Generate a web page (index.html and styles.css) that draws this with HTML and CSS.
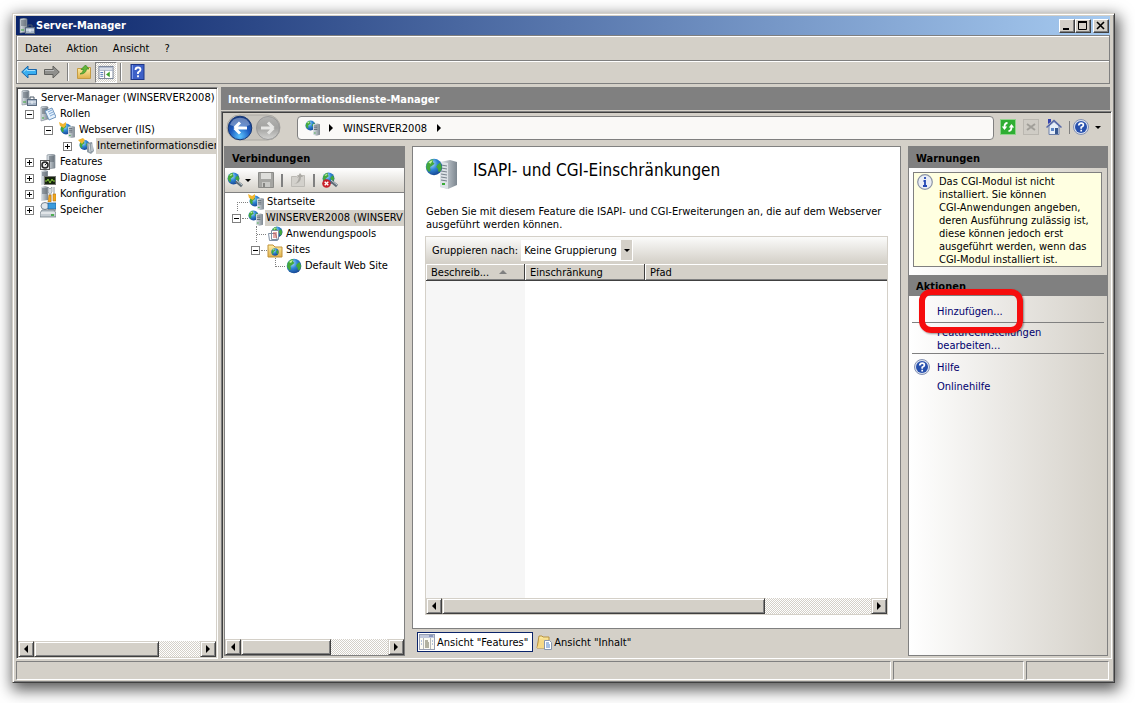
FILE: index.html
```html
<!DOCTYPE html>
<html lang="de">
<head>
<meta charset="utf-8">
<title>Server-Manager</title>
<link rel="stylesheet" href="styles.css">
</head>
<body>
<svg class="defs" aria-hidden="true">
  <defs>
    <radialGradient id="g-globe" cx=".35" cy=".3" r=".8"><stop offset="0" stop-color="#b8e4ff"/><stop offset=".45" stop-color="#2f86d6"/><stop offset="1" stop-color="#123a86"/></radialGradient>
    <radialGradient id="g-blue" cx=".5" cy=".85" r=".85"><stop offset="0" stop-color="#5cc4ff"/><stop offset=".5" stop-color="#1c5cc0"/><stop offset="1" stop-color="#163880"/></radialGradient>
    <linearGradient id="g-grey" x2="0" y2="1"><stop offset="0" stop-color="#b4b4b2"/><stop offset=".5" stop-color="#a2a2a0"/><stop offset="1" stop-color="#d4d4d2"/></linearGradient>
    <linearGradient id="g-tower"><stop offset="0" stop-color="#dfe5ea"/><stop offset="1" stop-color="#7d8790"/></linearGradient>
    <linearGradient id="g-folder" x2="0" y2="1"><stop offset="0" stop-color="#fff0a8"/><stop offset="1" stop-color="#dfb04c"/></linearGradient>
  </defs>
  <symbol id="globe" viewBox="0 0 16 16"><circle cx="8" cy="8" r="7.300" fill="url(#g-globe)"/><path d="M1.500 5Q4 1 7.500 1L7 3.500 8.500 5 6 7 4.500 8 5 11 3.500 12.500 1 9ZM11 6l2.500-2 1.500 4-1 3.500-2 1-.5-3L10 8Z" fill="#43a83c"/><path d="M3 4q2-2 4-2l-2 3Z" fill="#c9f2a0"/></symbol>
  <symbol id="tower" viewBox="0 0 8 14"><path d="M0 1 5 0 8 1V13L4 14 0 13Z" fill="url(#g-tower)"/><path d="M1 3h4M1 5h4M1 7h4" stroke="#5b6670"/><path d="M1 11h2" stroke="#3aa83a"/></symbol>
  <symbol id="server" viewBox="0 0 16 16"><path d="M1 1 5 0 8 1V14L1 15Z" fill="url(#g-tower)" stroke="#7b858e" stroke-width=".6"/><path d="M2 3h5M2 5h5M2 7h5" stroke="#56606a"/><path d="M2 12h3" stroke="#3aa83a"/><path d="M9 9V7h4v2" fill="none" stroke="#4b5866"/><rect x="6.500" y="9.500" width="9" height="6" fill="#a7b6c8" stroke="#5b6b7f"/><path d="M7 12h8M11 11v3" stroke="#eef3f8"/></symbol>
  <symbol id="roles" viewBox="0 0 16 16"><path d="M1 1 5 0 8 1V13L1 15Z" fill="url(#g-tower)" stroke="#7b858e" stroke-width=".6"/><path d="M2 3h5M2 5h5M2 7h5" stroke="#56606a"/><path d="M5 5 12 2 16 11 9 14Z" fill="#e6f1fc" stroke="#6d94bd"/><path d="M8 6l4-2M9 8l4-2M10 10l4-2" stroke="#7ba6d4"/><path d="M2 12h2" stroke="#3aa83a"/></symbol>
  <symbol id="web" viewBox="0 0 16 16"><use href="#globe" x="0" y="0" width="11" height="11"/><use href="#tower" x="8" y="3" width="7" height="13"/></symbol>
  <symbol id="webstar" viewBox="0 0 16 16"><use href="#globe" x="1" y="1" width="12" height="12"/><path d="M0 0 4 2 7 0 7 3 5 6 1 4Z" fill="#f1b530"/><use href="#tower" x="9" y="4" width="7" height="12"/></symbol>
  <symbol id="iis" viewBox="0 0 16 16"><use href="#globe" x="1" y="1" width="11" height="12"/><path d="M0 2 5 0 7 2 4 6Z" fill="#f1b530"/><path d="M9 5l5-1 2 9-3 3-4-2Z" fill="#8f9ba5"/><path d="M11 6l1 8M14 6v7" stroke="#dce3e8"/></symbol>
  <symbol id="features" viewBox="0 0 16 16"><path d="M7 1 11 0 15 1V14L7 15Z" fill="url(#g-tower)" stroke="#7b858e" stroke-width=".6"/><path d="M9 3h5M9 5h5M9 7h5" stroke="#56606a"/><rect x=".5" y="6.500" width="9" height="9" fill="#e8e8e8" stroke="#555"/><circle cx="5" cy="11" r="3" fill="none" stroke="#222" stroke-width="1.500"/><path d="M5 11l2-2" stroke="#222"/></symbol>
  <symbol id="diag" viewBox="0 0 16 16"><path d="M1 1 5 0 8 1V14L1 15Z" fill="url(#g-tower)"/><path d="M2 3h5M2 5h5" stroke="#56606a"/><rect x="4.500" y="6.500" width="11" height="8" fill="#16240e" stroke="#777"/><path d="M5 11h2l1-2 2 4 2-4 1 2h2" fill="none" stroke="#86cc3c"/></symbol>
  <symbol id="config" viewBox="0 0 16 16"><path d="M1 1 5 0 8 1V14L1 15Z" fill="url(#g-tower)"/><path d="M2 3h5M2 5h5M2 7h5" stroke="#56606a"/><path d="M8 1l2 2 2-2v5l-1 1v8H9V7L8 6Z" fill="#d8dde2" stroke="#7d8790" stroke-width=".6"/><path d="M14 1v7" stroke="#8c969e"/><path d="M9 9h2v7H8ZM13 8h3v7h-3Z" fill="#efa81f" stroke="#b87410" stroke-width=".6"/></symbol>
  <symbol id="storage" viewBox="0 0 16 16"><ellipse cx="5" cy="4" rx="4" ry="3.500" fill="#dfe6ec" stroke="#7a8792"/><rect x="8" y="1" width="8" height="6" fill="#3c9bdc" stroke="#1b5c96" stroke-width=".7"/><path d="M8 8h8" stroke="#777"/><path d="M2 8h12l2 3v4H0v-4Z" fill="#c3cbd1" stroke="#66727c" stroke-width=".7"/><path d="M1 11h14" stroke="#fff"/><path d="M11 13h3" stroke="#28a428" stroke-width="1.500"/></symbol>
  <symbol id="pools" viewBox="0 0 16 16"><use href="#globe" x="4" y="0" width="12" height="12"/><path d="M1.500 7.500h7l2 7h-8ZM4.500 4.500h7v9h-7Z" fill="#fff" stroke="#7f8fa3"/><path d="M6 7h4M6 9h4M6 11h4" stroke="#d2504a"/></symbol>
  <symbol id="sites" viewBox="0 0 16 16"><path d="M1 3h5l2 2h7v10H1Z" fill="url(#g-folder)" stroke="#c19137"/><use href="#globe" x="4" y="6" width="8" height="8"/></symbol>
  <symbol id="help" viewBox="0 0 16 16"><circle cx="8" cy="8" r="7.500" fill="#dbe2ef" stroke="#8592b4"/><circle cx="8" cy="8" r="6" fill="#2750ad"/><path d="M5.700 6.500Q6 4.200 8.200 4.200T10.400 6.200Q10.400 7.300 8.200 8.300V9.700M8.200 10.800v1.700" fill="none" stroke="#fff" stroke-width="1.700"/></symbol>
  <symbol id="connect" viewBox="0 0 16 16"><use href="#globe" x="0" y="0" width="13" height="13"/><path d="M9 9l6 5" stroke="#5f6c75" stroke-width="3"/><path d="M9 8l6 5" stroke="#c5d2da"/></symbol>
</svg>

<main class="window">
  <header class="titlebar">
    <svg class="i16"><use href="#server"/></svg>
    <h1>Server-Manager</h1>
    <button class="cap" aria-label="Minimieren"><svg viewBox="0 0 12 10"><path d="M2 8h6" stroke="#000" stroke-width="2"/></svg></button>
    <button class="cap" aria-label="Maximieren"><svg viewBox="0 0 12 10"><path d="M1.500 1v7.500h8V1M1 1h9" fill="none" stroke="#000"/><path d="M1 1h9" stroke="#000" stroke-width="2"/></svg></button>
    <button class="cap close" aria-label="Schließen"><svg viewBox="0 0 12 10"><path d="M2 1l7 7M9 1 2 8" stroke="#000" stroke-width="1.600"/></svg></button>
  </header>

  <nav class="menubar">
    <button>Datei</button><button>Aktion</button><button>Ansicht</button><button>?</button>
  </nav>

  <div class="toolbar">
    <button aria-label="Zurück"><svg class="i16" viewBox="0 0 16 16"><path d="M.7 8 7 2v3.500h8.500v5H7V14Z" fill="#39aef0" stroke="#1b66a8"/><path d="M3 7.500 6 5v1.500h8" fill="none" stroke="#a5defa"/></svg></button>
    <button aria-label="Vorwärts"><svg class="i16" viewBox="0 0 16 16"><path d="M15.300 8 9 2v3.500H.5v5H9V14Z" fill="#8f8f8c" stroke="#62625f"/><path d="M1 6.500h9" stroke="#bbb"/></svg></button>
    <i class="sep"></i>
    <button aria-label="Nach oben"><svg class="i16" viewBox="0 0 16 16"><path d="M1.500 4.500h5l1-1h7v11h-13Z" fill="url(#g-folder)" stroke="#c49b43"/><path d="M4 10Q7 9 7.500 5.500H5L9.500 1 13 5h-2.500Q10 10 4 10Z" fill="#62b53a" stroke="#34851e" stroke-width=".7"/></svg></button>
    <button class="pressed" aria-label="Konsolenstruktur"><svg class="i16" viewBox="0 0 16 16"><rect x=".5" y="1.500" width="15" height="13" fill="#fff" stroke="#707c92"/><path d="M1 3h14M1 5.500h14" stroke="#8798b5"/><path d="M6.500 6v8" stroke="#777"/><path d="M2 8h3M2 10h3M2 12h3" stroke="#4d75b4"/><path d="M12 7v6L8 10Z" fill="#3ba32b"/></svg></button>
    <i class="sep"></i>
    <button aria-label="Hilfe"><svg class="i16" viewBox="0 0 16 16"><rect x="2" y=".5" width="13" height="15" fill="#3d60c8" stroke="#1f3688"/><path d="M3.500 1v14" stroke="#7d9bec"/><path d="M6.500 6Q6.500 3.500 9 3.500T11.500 5.800Q11.500 7 9 8.500V10M9 11.300v2" fill="none" stroke="#fff" stroke-width="1.800"/></svg></button>
  </div>

  <div class="panes">
    <aside class="console">
      <ul class="tree">
        <li class="row l0"><svg class="i16"><use href="#server"/></svg><span>Server-Manager (WINSERVER2008)</span></li>
        <li class="row l1"><button class="ex" aria-label="Reduzieren"></button><svg class="i16"><use href="#roles"/></svg><span>Rollen</span></li>
        <li class="row l2"><button class="ex" aria-label="Reduzieren"></button><svg class="i16"><use href="#webstar"/></svg><span>Webserver (IIS)</span></li>
        <li class="row l3"><button class="ex plus" aria-label="Erweitern"></button><svg class="i16"><use href="#iis"/></svg><span class="sel">Internetinformationsdien</span></li>
        <li class="row l1"><button class="ex plus" aria-label="Erweitern"></button><svg class="i16"><use href="#features"/></svg><span>Features</span></li>
        <li class="row l1"><button class="ex plus" aria-label="Erweitern"></button><svg class="i16"><use href="#diag"/></svg><span>Diagnose</span></li>
        <li class="row l1"><button class="ex plus" aria-label="Erweitern"></button><svg class="i16"><use href="#config"/></svg><span>Konfiguration</span></li>
        <li class="row l1"><button class="ex plus" aria-label="Erweitern"></button><svg class="i16"><use href="#storage"/></svg><span>Speicher</span></li>
      </ul>
      <div class="scroll"><button class="sb" aria-label="Links"><i class="tri left"></i></button><i class="thumb t-console"></i><i class="track"></i><button class="sb" aria-label="Rechts"><i class="tri"></i></button></div>
    </aside>

    <section class="snapin">
      <h2 class="snaptitle">Internetinformationsdienste-Manager</h2>
      <div class="iisbody">
        <div class="address">
          <svg class="backfwd" viewBox="0 0 56 28"><rect x="1" y="1" width="53" height="25" rx="12.500" fill="#c8c5be" stroke="#aaa8a2"/><circle cx="14" cy="14" r="11.800" fill="url(#g-blue)" stroke="#173773"/><path d="M4 11a10.500 10.500 0 0 1 20 0Q14 15 4 11Z" fill="#fff" opacity=".35"/><path d="M8.500 14 14 8.500M8.500 14l5.500 5.500M8.500 14H21" fill="none" stroke="#fff" stroke-width="3"/><circle cx="42" cy="14" r="11.500" fill="url(#g-grey)" stroke="#999"/><path d="M47.500 14 42 8.500M47.500 14 42 19.500M47.500 14H35" fill="none" stroke="#e6e6e4" stroke-width="3"/></svg>
          <div class="crumbs"><svg class="i16"><use href="#web"/></svg><i class="tri"></i><button>WINSERVER2008</button><i class="tri"></i></div>
          <div class="addrtools">
            <button aria-label="Aktualisieren"><svg class="i16" viewBox="0 0 16 16"><rect x=".5" y=".5" width="15" height="15" fill="#2fae33" stroke="#8ed48a"/><path d="M7.500 4Q4.500 4 4.500 8M8.500 12Q11.500 12 11.500 8" fill="none" stroke="#fff" stroke-width="1.800"/><path d="M1.800 7.500h5.400L4.500 11ZM8.800 8.500h5.400L11.500 5Z" fill="#fff"/></svg></button>
            <button aria-label="Stopp" disabled><svg class="i16" viewBox="0 0 16 16"><rect x=".5" y=".5" width="15" height="15" fill="#cfccc5" stroke="#bab7b0"/><path d="M4 5l8 6M12 5l-8 6" stroke="#a19f99" stroke-width="2"/></svg></button>
            <button aria-label="Startseite"><svg class="i16" viewBox="0 0 16 16"><path d="M3 7v8.500h10V7L8 2.500Z" fill="#e7eef8" stroke="#6c7fa8"/><path d="M.5 8.500 8 1.500l7.500 7" fill="none" stroke="#5668a8" stroke-width="1.500"/><path d="M2 0h3v3l-3 2Z" fill="#3441b0"/><rect x="5" y="9" width="3" height="3" fill="#5e86c5"/><rect x="9" y="9" width="3" height="6" fill="#38588f"/></svg></button>
            <i class="bar"></i>
            <button class="drop" aria-label="Hilfe"><svg class="i16"><use href="#help"/></svg><i class="tri down"></i></button>
          </div>
        </div>

        <div class="columns">
          <aside class="connections">
            <h3>Verbindungen</h3>
            <div class="conntools">
              <button class="drop" aria-label="Verbinden"><svg class="i16"><use href="#connect"/></svg><i class="tri down"></i></button>
              <button aria-label="Speichern" disabled><svg class="i16" viewBox="0 0 16 16"><path d="M.5.5h15v15H.5Z" fill="#a5a5a2" stroke="#8b8b88"/><path d="M3 1h10v6H3Z" fill="#dededb"/><path d="M4 10h8v5H4Z" fill="#c8c8c5"/><path d="M5 11h2v4H5Z" fill="#858582"/></svg></button>
              <i class="bar"></i>
              <button aria-label="Nach oben" disabled><svg class="i16" viewBox="0 0 16 16"><path d="M1.500 4.500h5l1-1h7v11h-13Z" fill="#d3d1cc" stroke="#bcbab5"/><path d="M4 12q4-1 5-7l-2 1 3-5 3 4H11q0 6-7 7Z" fill="#acaaa5"/></svg></button>
              <i class="bar"></i>
              <button aria-label="Trennen"><svg class="i16" viewBox="0 0 16 16"><use href="#connect"/><circle cx="4.500" cy="11.500" r="4.300" fill="#c8202a"/><path d="M2.700 9.700l3.600 3.600M6.300 9.700l-3.600 3.600" stroke="#fff" stroke-width="1.400"/></svg></button>
            </div>
            <ul class="tree conn">
              <li class="row c0"><i class="dots"></i><svg class="i16"><use href="#webstar"/></svg><span>Startseite</span></li>
              <li class="row c1"><button class="ex" aria-label="Reduzieren"></button><i class="dots short"></i><svg class="i16"><use href="#web"/></svg><span class="sel">WINSERVER2008 (WINSERV</span></li>
              <li class="row c2"><i class="dots vert"></i><svg class="i16"><use href="#pools"/></svg><span>Anwendungspools</span></li>
              <li class="row c3"><button class="ex" aria-label="Reduzieren"></button><i class="dots short"></i><svg class="i16"><use href="#sites"/></svg><span>Sites</span></li>
              <li class="row c4"><i class="dots vert"></i><svg class="i16"><use href="#globe"/></svg><span>Default Web Site</span></li>
            </ul>
            <div class="scroll"><button class="sb" aria-label="Links"><i class="tri left"></i></button><i class="thumb t-conn"></i><i class="track"></i><button class="sb" aria-label="Rechts"><i class="tri"></i></button></div>
          </aside>

          <div class="center">
            <article class="card">
              <div class="heading">
                <svg class="i32" viewBox="0 0 32 32"><path d="M15 4 25 2 32 4V27L23 31 15 29Z" fill="url(#g-tower)"/><path d="M15 4 23 5V31L15 29Z" fill="#dce2e7"/><path d="M16 7l6 1M16 10l6 1M16 13l6 1M16 16l6 1M16 19l6 1M16 22l6 1" stroke="#76828c"/><path d="M17 26h3" stroke="#38ac38" stroke-width="2"/><use href="#globe" x="0" y="0" width="18" height="18"/></svg>
                <h2>ISAPI- und CGI-Einschränkungen</h2>
              </div>
              <p>Geben Sie mit diesem Feature die ISAPI- und CGI-Erweiterungen an, die auf dem Webserver ausgeführt werden können.</p>
              <div class="group">
                <label for="grouping">Gruppieren nach:</label>
                <span class="selwrap"><select id="grouping"><option>Keine Gruppierung</option></select><i class="tri down"></i></span>
              </div>
              <div class="grid">
                <table>
                  <thead><tr><th class="w1">Beschreib...<i class="sort"></i></th><th class="w2">Einschränkung</th><th>Pfad</th></tr></thead>
                  <tbody><tr><td class="sorted"></td><td></td><td></td></tr></tbody>
                </table>
                <div class="scroll"><button class="sb" aria-label="Links"><i class="tri left"></i></button><i class="thumb t-grid"></i><i class="track"></i><button class="sb" aria-label="Rechts"><i class="tri"></i></button></div>
              </div>
            </article>
            <div class="tabs">
              <button class="tab on"><svg class="i16" viewBox="0 0 16 16"><rect x=".5" y=".5" width="15" height="15" fill="#fbfbf4" stroke="#98a0b2"/><path d="M1 2.500h14" stroke="#c2c9dc" stroke-width="3"/><path d="M10 2h4" stroke="#5366a0"/><path d="M4.500 4v11M11.500 4v11" stroke="#b5b8b8"/><path d="M6 7h3M6 9h4M6 11h4M6 13h4" stroke="#68684e"/><path d="M2 7h1M2 10h1M13 7h1M13 10h1" stroke="#6d8ac2"/></svg>Ansicht "Features"</button>
              <button class="tab"><svg class="i16" viewBox="0 0 16 16"><path d="M1 14 3 2h3l1 1h6v3l-3 8Z" fill="url(#g-folder)" stroke="#b8913f"/><path d="M1 14 4 6h9l-3 8Z" fill="#f5d987"/><path d="M8.500 6.500h5l2 2v7h-7Z" fill="#fff" stroke="#8896ad"/><path d="M10 9h3M10 11h4M10 13h4" stroke="#4c80c8"/></svg>Ansicht "Inhalt"</button>
            </div>
          </div>

          <aside class="actions">
            <h3>Warnungen</h3>
            <div class="warn">
              <svg class="i16" viewBox="0 0 16 16"><circle cx="8" cy="8" r="7.300" fill="#e9edf5" stroke="#8b93a5" stroke-width="1.200"/><path d="M8 3v2M6.500 7H8v5M6 12h4" fill="none" stroke="#2347b5" stroke-width="1.800"/></svg>
              <p>Das CGI-Modul ist nicht<br>installiert. Sie können<br>CGI-Anwendungen angeben,<br>deren Ausführung zulässig ist,<br>diese können jedoch erst<br>ausgeführt werden, wenn das<br>CGI-Modul installiert ist.</p>
            </div>
            <h3>Aktionen</h3>
            <div class="links">
              <a href="#add">Hinzufügen...</a>
              <a class="lined" href="#edit">Featureeinstellungen<br>bearbeiten...</a>
              <a class="lined help" href="#help-topic"><svg class="i16"><use href="#help"/></svg>Hilfe</a>
              <a href="#online">Onlinehilfe</a>
              <i class="marker"></i>
            </div>
          </aside>
        </div>
      </div>
    </section>
  </div>

  <footer class="status"><span class="s1"></span><span class="s2"></span><span class="s3"></span></footer>
</main>
</body>
</html>
```
FILE: styles.css
```css
* { box-sizing: border-box; }
html, body { height: 100%; }
body {
  margin: 0;
  padding: 13px 20px 20px 12px;
  background: #fff;
  color: #000;
  font: 11px/13px "DejaVu Sans Condensed", "DejaVu Sans", sans-serif;
}
.defs { position: absolute; width: 0; height: 0; }
h1, h2, h3, p, ul { margin: 0; padding: 0; }
ul { list-style: none; }
button { margin: 0; padding: 0; border: 0; background: none; font: inherit; color: inherit; }
svg { display: block; flex: none; }
.i16 { width: 16px; height: 16px; }
.i32 { width: 32px; height: 32px; }

.window {
  display: flex;
  flex-direction: column;
  height: 100%;
  padding: 2px 2px 2px 3px;
  background: #d4d0c8;
  border: 1px solid #d4d0c8;
  border-right-color: #404040;
  border-bottom-color: #404040;
  box-shadow: inset 1px 1px #fff, inset -1px -1px #808080, 2px 5px 14px 2px rgba(0, 0, 0, .65);
}
.titlebar {
  display: flex;
  align-items: center;
  flex: none;
  height: 19px;
  padding: 0 1px 0 3px;
  margin-right: 2px;
  background: linear-gradient(90deg, #0a246a, #a6caf0);
}
.titlebar h1 { flex: 1; margin-left: 1px; font-size: 11px; color: #fff; }
.cap {
  width: 16px;
  height: 14px;
  padding: 1px;
  background: #d4d0c8;
  border: 1px solid #fff;
  border-right-color: #404040;
  border-bottom-color: #404040;
  box-shadow: inset -1px -1px #808080;
}
.cap svg { width: 12px; height: 10px; }
.cap.close { margin-left: 2px; }

.menubar, .toolbar {
  display: flex;
  align-items: center;
  flex: none;
  margin-right: 2px;
  border: 1px solid #808080;
  box-shadow: inset 1px 1px #fff;
}
.menubar { height: 26px; padding: 0 8px; gap: 15px; }
.toolbar { height: 24px; padding: 0 4px; margin-top: -1px; gap: 7px; }
.toolbar .sep { width: 2px; height: 18px; border-left: 1px solid #808080; border-right: 1px solid #fff; }
.pressed {
  padding: 2px;
  margin: 0 -4px 0 -4px;
  background: repeating-conic-gradient(#fff 0 25%, #d4d0c8 0 50%) 0 0 / 2px 2px;
  border: 1px solid #808080;
  border-right-color: #fff;
  border-bottom-color: #fff;
}
.pressed .i16 { height: 15px; }

.panes { display: flex; flex: 1; min-height: 0; margin-top: 3px; gap: 3px; }
.console {
  display: flex;
  flex-direction: column;
  flex: 0 0 202px;
  min-width: 0;
  padding: 1px;
  background: #fff;
  border: 1px solid #808080;
  border-right-color: #fff;
  border-bottom-color: #fff;
  box-shadow: inset 1px 1px #404040, inset -1px -1px #d4d0c8;
}
.tree { flex: 1; min-height: 0; padding-top: 1px; overflow: hidden; }
.row { display: flex; align-items: center; height: 16px; white-space: nowrap; }
.row span { padding: 1px 1px 2px; margin-left: 3px; }
.row .sel { flex: 1; background: #d4d0c8; }
.l0 { padding-left: 3px; }
.l1 { padding-left: 7px; }
.l2 { padding-left: 26px; }
.l3 { padding-left: 45px; }
.l3 .sel { margin-left: 2px; }
.ex {
  flex: none;
  width: 9px;
  height: 9px;
  margin-right: 6px;
  background: linear-gradient(#000, #000) center / 5px 1px no-repeat, #fff;
  border: 1px solid #808080;
}
.ex.plus {
  background: linear-gradient(#000, #000) center / 5px 1px no-repeat, linear-gradient(#000, #000) center / 1px 5px no-repeat, #fff;
}

.scroll { display: flex; flex: none; height: 16px; }
.sb, .thumb {
  background: #d4d0c8;
  border: 1px solid #d4d0c8;
  border-right-color: #404040;
  border-bottom-color: #404040;
  box-shadow: inset 1px 1px #fff, inset -1px -1px #808080;
}
.sb { display: flex; align-items: center; justify-content: center; flex: 0 0 16px; }
.thumb { flex: none; }
.t-console { width: 63%; }
.t-conn { width: 50%; }
.t-grid { width: 70%; }
.track { flex: 1; background: repeating-conic-gradient(#fff 0 25%, #d4d0c8 0 50%) 0 0 / 2px 2px; }
.tri { flex: none; width: 0; height: 0; border: 4px solid transparent; border-left-color: #000; border-right-width: 0; }
.tri.left { border-width: 4px 4px 4px 0; border-color: transparent #000 transparent transparent; }
.tri.down { border-width: 3px 3px 0; border-color: #000 transparent transparent; }

.snapin { display: flex; flex-direction: column; flex: 1; min-width: 0; }
.snaptitle {
  flex: none;
  height: 23px;
  padding: 6px 7px 4px;
  margin: 0 2px 1px 0;
  background: #808080;
  color: #fff;
  font-size: 11px;
}
.iisbody {
  display: flex;
  flex-direction: column;
  flex: 1;
  min-height: 0;
  padding: 0 3px 2px 2px;
  border: 1px solid #808080;
  border-right-color: #fff;
  border-bottom-color: #fff;
  box-shadow: inset 1px 1px #404040;
}
.address { display: flex; align-items: center; flex: none; height: 34px; padding: 1px 7px 3px 2px; }
.backfwd { width: 56px; height: 28px; }
.crumbs {
  display: flex;
  align-items: center;
  flex: 1;
  height: 24px;
  margin-left: 15px;
  padding: 0 7px;
  gap: 8px;
  background: #faf9f7;
  border: 1px solid #808080;
  border-radius: 4px;
}
.crumbs button { margin: 0 2px; }
.addrtools { display: flex; align-items: center; gap: 7px; margin-left: 6px; padding-bottom: 2px; }
.drop { display: flex; align-items: center; gap: 6px; }
.bar { width: 2px; height: 13px; background: #808080; }
.addrtools .bar { margin-right: -4px; width: 1px; }

.columns { display: flex; flex: 1; min-height: 0; gap: 7px; }
.connections {
  display: flex;
  flex-direction: column;
  flex: 0 0 181px;
  min-width: 0;
  background: #fff;
  border: 1px solid #808080;
}
h3 { flex: none; height: 21px; padding: 5px 7px 3px; background: #808080; font-size: 11px; }
.conntools {
  display: flex;
  align-items: center;
  flex: none;
  height: 25px;
  padding: 0 2px;
  gap: 7px;
  background: linear-gradient(#fff, #d4d0c8);
  border-bottom: 1px solid #808080;
}
.conntools .drop { gap: 2px; }
.conn .row span { margin-left: 2px; }
.conn .row .sel { padding-right: 0; margin-left: 1px; }
.conn .ex { margin-right: 1px; }
.c0 { padding-left: 12px; }
.c1 { padding-left: 7px; }
.c2 { padding-left: 31px; }
.c3 { padding-left: 26px; }
.c4 { padding-left: 50px; }
.dots { flex: none; width: 11px; height: 1px; border-top: 1px dotted #808080; }
.dots.short { width: 6px; }
.c0 .dots { height: 9px; margin-top: 8px; border-left: 1px dotted #808080; }
.dots.vert { height: 16px; align-self: flex-start; border-top: 0; border-left: 1px dotted #808080; background: repeating-linear-gradient(90deg, #808080 0 1px, transparent 1px 2px) 0 8px / 100% 1px no-repeat; }
.c4 .dots.vert { height: 9px; }

.center { display: flex; flex-direction: column; flex: 1; min-width: 0; }
.card {
  display: flex;
  flex-direction: column;
  flex: 1;
  min-height: 0;
  padding: 11px 12px 13px;
  background: #fff;
  border: 1px solid #808080;
}
.heading { display: flex; gap: 16px; height: 47px; }
.heading h2 { padding-top: 2px; font-size: 17px; line-height: 20px; font-weight: 400; }
.card p { height: 31px; padding-left: 1px; }
.group {
  display: flex;
  align-items: center;
  flex: none;
  height: 28px;
  padding: 0 6px;
  gap: 3px;
  background: linear-gradient(#fbfbfa, #d4d0c8);
  border: 1px solid #d4d0c8;
}
.selwrap { display: flex; align-items: center; height: 21px; background: #fff; padding-right: 3px; }
select {
  appearance: none;
  height: 20px;
  padding: 0 15px 0 3px;
  margin-right: -8px;
  background: linear-gradient(#d4d0c8, #d4d0c8) right / 11px 100% no-repeat #fff;
  border: 0;
  border-radius: 0;
  font: inherit;
  color: #000;
}
.selwrap .tri { z-index: 1; }
.grid { display: flex; flex-direction: column; flex: 1; min-height: 0; border: 1px solid #d4d0c8; border-width: 0 1px 1px; }
table { flex: 1; width: 100%; display: flex; flex-direction: column; border-collapse: collapse; }
thead, tbody { display: block; }
tbody { flex: 1; display: flex; }
tr { display: flex; width: 100%; }
th, td { flex: 1; padding: 0; }
th {
  height: 17px;
  padding: 3px 5px 0;
  background: #d4d0c8;
  border-right: 1px solid #404040;
  border-bottom: 1px solid #404040;
  box-shadow: inset 1px 1px #fff, inset 0 -1px #808080;
  line-height: 12px;
  text-align: left;
  font-weight: 400;
}
th:last-child { border-right: 0; }
th.w1, .sorted { flex: 0 0 99px; }
th.w2 { flex: 0 0 120px; }
.sorted { background: #f6f6f6; }
.sort { display: inline-block; margin-left: 10px; border: 4px solid transparent; border-top: 0; border-bottom-color: #808080; vertical-align: 2px; }
.tabs { display: flex; flex: none; height: 27px; padding: 3px 5px; gap: 1px; }
.tab { display: flex; align-items: center; gap: 2px; height: 20px; padding: 0 4px 0 1px; border: 1px solid transparent; }
.tab.on { background: #fff; border-color: #0a246a; }

.actions {
  display: flex;
  flex-direction: column;
  flex: 0 0 200px;
  min-width: 0;
  background: linear-gradient(90deg, #fff, #d4d0c8);
  border: 1px solid #808080;
}
.warn {
  display: flex;
  flex: none;
  height: 95px;
  margin: 4px 5px 8px 4px;
  padding: 1px 3px;
  gap: 6px;
  background: #ffffe1;
  border: 1px solid #808080;
}
.warn p { flex: 1; white-space: nowrap; margin-top: 1px; }
.links { position: relative; display: flex; flex-direction: column; padding: 0 3px; }
.links a { padding: 5px 0 0 25px; color: #00006e; text-decoration: none; }
.links a:first-child { padding: 9px 0 4px 25px; }
.links .lined { padding-top: 3px; border-top: 1px solid #808080; }
.links a.help { display: flex; align-items: center; gap: 7px; padding: 5px 0 0 2px; margin-top: 1px; }
.marker {
  position: absolute;
  left: 10px;
  top: -7px;
  width: 104px;
  height: 44px;
  border: 6px solid #f60d0d;
  border-radius: 12px;
  box-shadow: 1px 1px 2px rgba(0, 0, 0, .4);
}

.status { display: flex; flex: none; height: 19px; margin: 2px 3px 0 0; gap: 2px; }
.status span { border: 1px solid #fff; border-top-color: #808080; border-left-color: #808080; }
.s1 { flex: 1; }
.s2 { flex: 0 0 131px; }
.s3 { flex: 0 0 83px; }
```
